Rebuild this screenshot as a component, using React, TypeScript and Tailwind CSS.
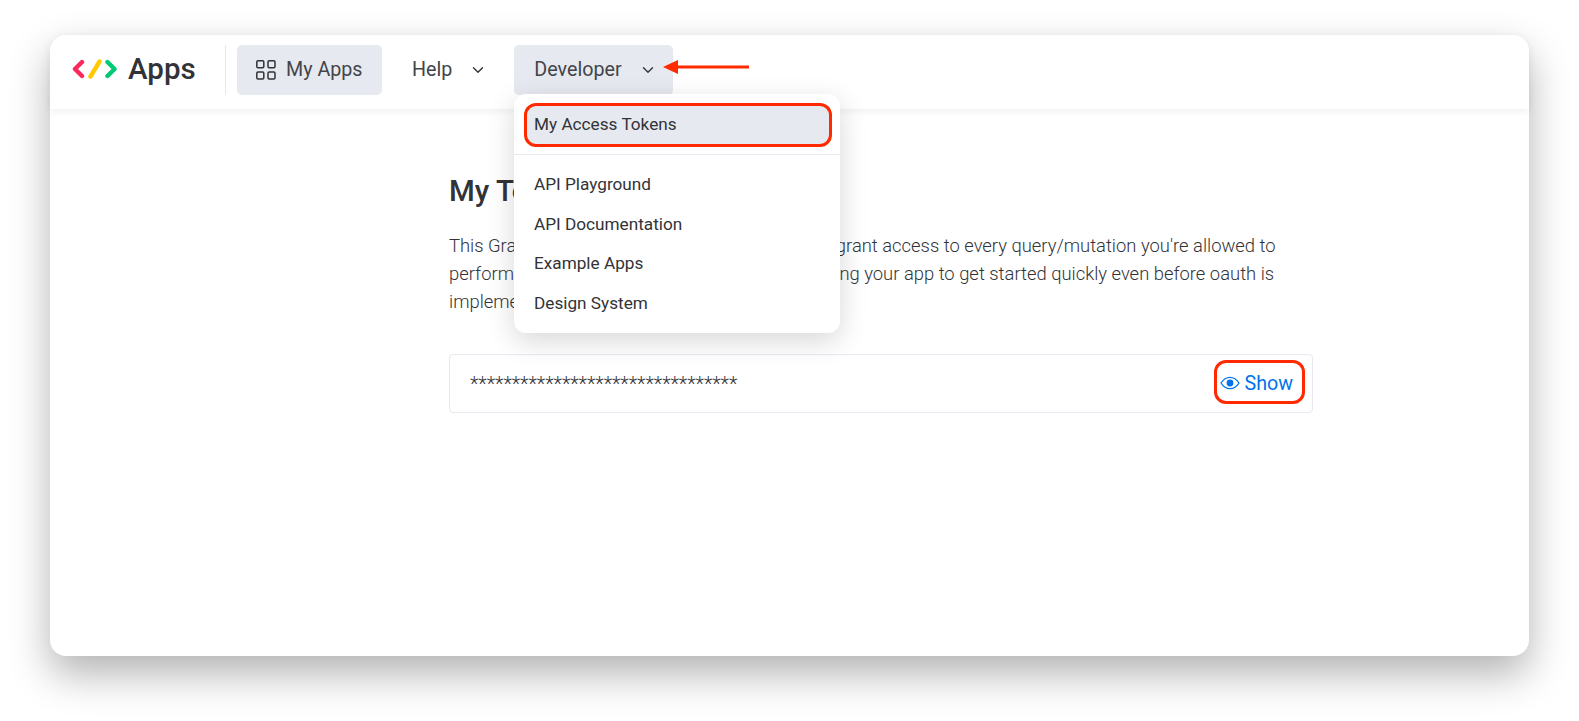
import React from "react";

const font = { fontFamily: "Roboto, sans-serif" };

function Chevron() {
  return (
    <svg width="14" height="14" viewBox="0 0 14 14" fill="none" stroke="#323338" strokeWidth="1.4" strokeLinecap="round" strokeLinejoin="round">
      <path d="M2.5 4.800 7 9.200l4.500-4.400" />
    </svg>
  );
}

function Logo() {
  return (
    <svg className="-mt-[2px]" width="45" height="20" viewBox="0 0 45 20" fill="none" strokeWidth="4.400" strokeLinecap="round" strokeLinejoin="round">
      <path d="M10 3 3 10l7 7" stroke="#fb275d" />
      <path d="M27.500 2.500 18.500 17.500" stroke="#ffcb00" />
      <path d="M35.500 3l7 7-7 7" stroke="#00ca72" />
    </svg>
  );
}

function Grid() {
  return (
    <svg width="22" height="22" viewBox="0 0 22 22" fill="none" stroke="#323338" strokeWidth="1.500">
      <rect x="1.800" y="1.800" width="7" height="7" rx="1.200" />
      <rect x="13" y="1.800" width="7" height="7" rx="1.200" />
      <rect x="1.800" y="13" width="7" height="7" rx="1.200" />
      <rect x="13" y="13" width="7" height="7" rx="1.200" />
    </svg>
  );
}

function Eye() {
  return (
    <svg width="20" height="14" viewBox="0 0 20 14" fill="none">
      <path d="M1 7c2.400-3.800 5.400-5.700 9-5.700S16.600 3.200 19 7c-2.400 3.800-5.400 5.700-9 5.700S3.400 10.800 1 7Z" stroke="#0073ea" strokeWidth="1.300" />
      <circle cx="10" cy="7" r="3.400" fill="#0073ea" />
    </svg>
  );
}

export default function App() {
  return (
    <div className="h-[721px] w-full overflow-hidden bg-white pl-[50px] pt-[35px]" style={font}>
      <div className="relative flex h-[621px] w-[1479px] flex-col rounded-[16px] bg-white text-[#323338] shadow-[0_18px_40px_rgba(0,0,0,0.3)]">
        <header className="flex h-[74px] shrink-0 items-center rounded-t-[16px] bg-white pb-[4px] pl-[22px] shadow-[0_2px_8px_rgba(0,0,0,0.07)]">
          <Logo />
          <span className="ml-[11px] w-[97px] text-[29.500px] font-medium leading-none">Apps</span>
          <div className="h-[50px] w-px bg-[#e6e9ef]" />
          <button className="ml-[11px] flex h-[50px] w-[145px] items-center rounded-[5px] bg-[#e6e9ef] pl-[18px] text-[19.700px] text-[#43454a]">
            <Grid />
            <span className="ml-[9px]">My Apps</span>
          </button>
          <button className="ml-[30px] flex h-[50px] items-center text-[19.700px] text-[#43454a]">
            <span>Help</span>
            <span className="ml-[19px]"><Chevron /></span>
          </button>
          <button className="ml-[29px] flex h-[50px] w-[159px] items-center rounded-[5px] bg-[#e6e9ef] pl-[20px] text-[19.700px] text-[#43454a]">
            <span>Developer</span>
            <span className="ml-[19px]"><Chevron /></span>
          </button>
        </header>

        <main className="ml-[399px] mt-[63px] w-[864px]">
          <h1 className="text-[29.500px] font-medium leading-[38px]">My Tokens</h1>
          <div className="mt-[22px] text-[18.400px] font-light leading-[28px] text-[#323338]">
            <p className="whitespace-nowrap">This GraphQL API token is personal and this will grant access to every query/mutation you're allowed to</p>
            <p className="whitespace-nowrap">perform on your account. Use this while developing your app to get started quickly even before oauth is</p>
            <p className="whitespace-nowrap">implemented in your application.</p>
          </div>
          <div className="mt-[38px] flex h-[59px] items-center justify-between rounded-[4px] border border-[#e6e9ef] pl-[20px] pr-[19px]">
            <span className="pt-[2px] text-[19.700px] font-light">********************************</span>
            <span className="flex items-center gap-[4px] text-[19.700px] text-[#0073ea]">
              <Eye />
              Show
            </span>
          </div>
        </main>

        <div className="absolute left-[464px] top-[59px] h-[239px] w-[326px] rounded-[12px] bg-white pl-[10px] pr-[8px] pt-[9px] shadow-[0_8px_28px_rgba(0,0,0,0.16)]">
          <div className="flex h-[44px] items-center rounded-[12px] border-[3px] border-[#ff2a00] bg-[#e6e9ef] pb-[1px] pl-[7px] text-[17.200px]">My Access Tokens</div>
          <div className="-ml-[10px] -mr-[8px] mt-[7px] h-px bg-[#e6e9ef]" />
          <ul className="mt-[10px] text-[17.200px] leading-[39.500px]">
            <li className="pl-[10px]">API Playground</li>
            <li className="pl-[10px]">API Documentation</li>
            <li className="pl-[10px]">Example Apps</li>
            <li className="pl-[10px]">Design System</li>
          </ul>
        </div>

        <svg className="absolute left-[613px] top-[23px]" width="90" height="18" viewBox="0 0 90 18" fill="#ff2a00">
          <path d="M0 9 15 2v5.500h71v3H15V16Z" />
        </svg>
        <div className="absolute left-[1164px] top-[325px] h-[44px] w-[91px] rounded-[12px] border-[3px] border-[#ff2a00]" />
      </div>
    </div>
  );
}
